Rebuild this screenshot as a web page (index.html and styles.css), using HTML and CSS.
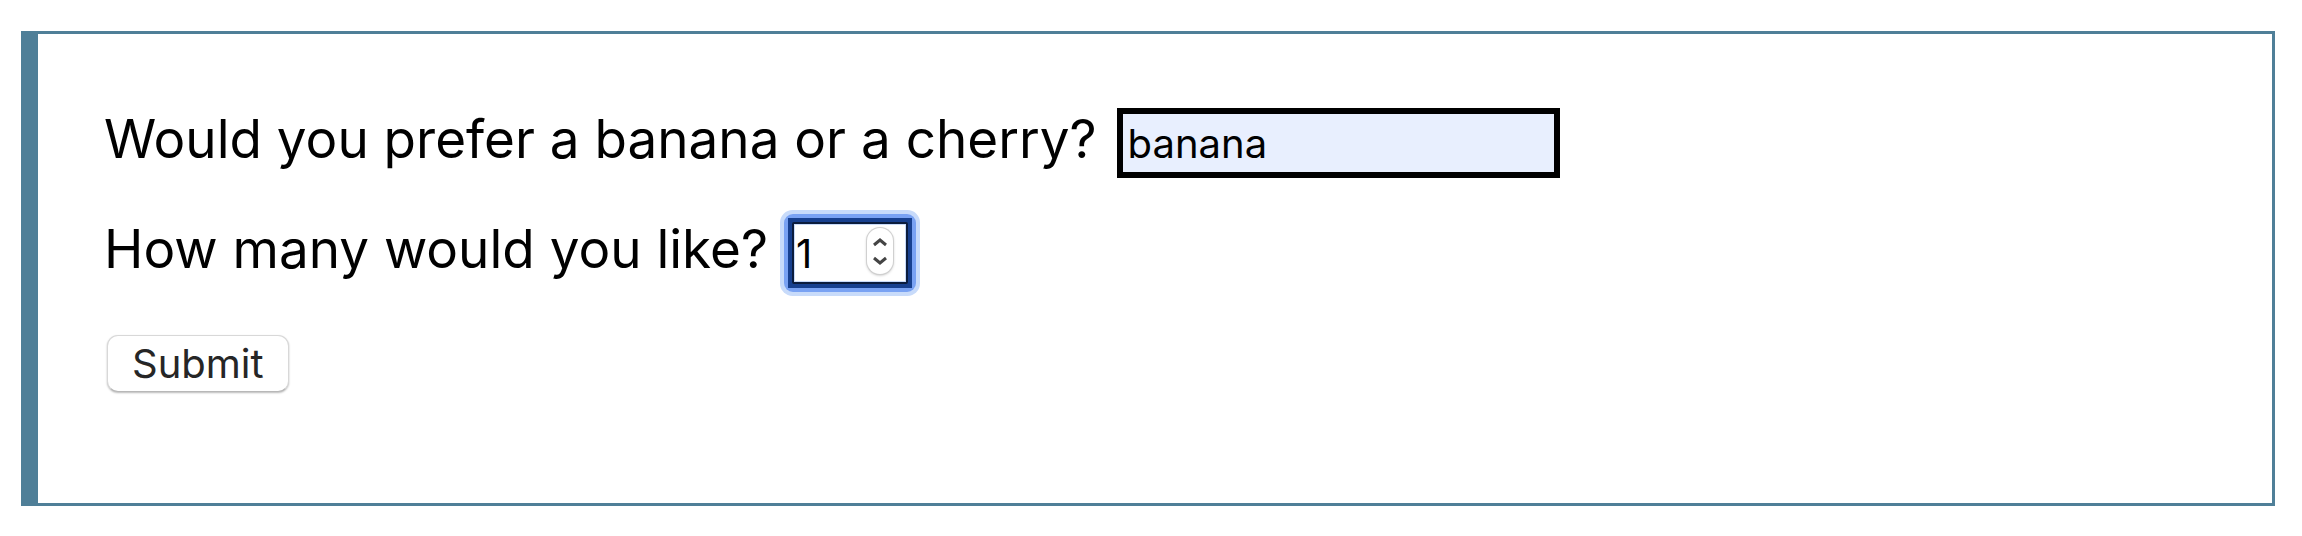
FILE: index.html
```html
<!DOCTYPE html>
<html lang="en">
<head>
<meta charset="utf-8">
<title>Fruit order</title>
<link rel="stylesheet" href="styles.css">
</head>
<body>
<form class="panel">
  <div class="row">
    <label class="label" for="choose">Would you prefer a banana or a cherry?</label>
    <input class="field field-text" id="choose" name="choose" type="text" value="banana">
  </div>
  <div class="row">
    <label class="label" for="number">How many would you like?</label>
    <span class="stepper">
      <input class="field field-number" id="number" name="number" type="number" min="1" value="1">
      <svg class="arrows" viewBox="0 0 26 46" aria-hidden="true">
        <path d="M7 17 13 12 19 17M7 30 13 35 19 30"/>
      </svg>
    </span>
  </div>
  <button class="submit" type="button">Submit</button>
</form>
</body>
</html>
```

FILE: styles.css
```css
* {
  box-sizing: border-box;
}

body {
  margin: 31px 27px 24px 21px;
  background: #fff;
  color: #000;
  font-family: Inter, "Liberation Sans", sans-serif;
}

.panel {
  border: 3px solid #4f7f98;
  border-left-width: 17px;
  padding: 74px 66px 111px;
}

.row {
  display: flex;
  align-items: baseline;
  gap: 20px;
  margin-bottom: 40px;
}

.label {
  font-size: 53px;
  line-height: 60px;
}

.field {
  margin: 0;
  border: 6px solid #000;
  border-radius: 0;
  padding: 6px 5px 4px;
  background: #fff;
  color: #000;
  font-family: inherit;
  font-size: 40px;
  line-height: 48px;
  outline: none;
}

.field-text {
  width: 443px;
  background: #e8effe;
}

.stepper {
  position: relative;
  border-radius: 5px;
  box-shadow: 0 0 0 4px #79a2f3, 0 0 0 8px #c8dbfa;
}

.field-number {
  display: block;
  width: 124px;
  padding-left: 2px;
  border-color: #17408f;
  box-shadow: inset 0 0 0 1px #c8dbfa;
  appearance: textfield;
}

.field-number::-webkit-inner-spin-button {
  appearance: none;
  margin: 0;
}

.stepper::before {
  content: "";
  position: absolute;
  inset: 4px;
  border: 2px solid #0b1c3d;
  border-radius: 2px;
  pointer-events: none;
}

.arrows {
  position: absolute;
  top: 10px;
  right: 19px;
  width: 26px;
  height: 46px;
  border-radius: 13px;
  background: #fff;
  box-shadow: 0 0 0 1px #d0d0d0, 0 1px 3px #aaa;
  fill: none;
  stroke: #444;
  stroke-width: 3;
  pointer-events: none;
}

.submit {
  display: block;
  margin: 47px 0 0 3px;
  border: 1px solid #d8d8d8;
  border-bottom-color: #b8b8b8;
  border-radius: 11px;
  padding: 4px 24px 3px;
  background: #fff;
  box-shadow: 0 1px 2px #bbb;
  color: #262626;
  font-family: inherit;
  font-size: 40px;
  line-height: 48px;
}
```
